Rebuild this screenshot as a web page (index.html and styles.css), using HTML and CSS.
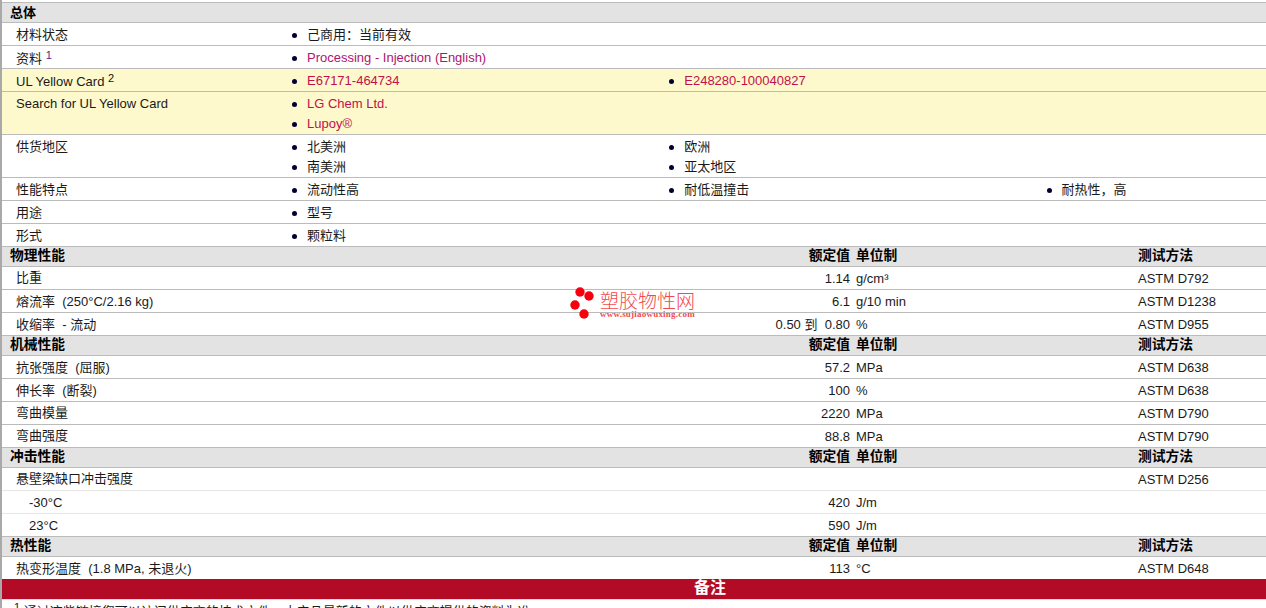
FILE: index.html
```html
<!DOCTYPE html>
<html lang="zh-CN">
<head>
<meta charset="utf-8">
<title>Lupoy</title>
<link rel="stylesheet" href="styles.css">
</head>
<body>
<main class="sheet">
  <div class="head"><span>总体</span></div>
  <div class="row"><div class="label">材料状态</div><ul class="vals"><li>己商用：当前有效</li></ul></div>
  <div class="row"><div class="label cjk-sup">资料 <sup class="note visited">1</sup></div><ul class="vals"><li><a class="visited">Processing - Injection (English)</a></li></ul></div>
  <div class="row yellow"><div class="label cjk-sup">UL Yellow Card <sup class="note">2</sup></div><ul class="vals"><li><a>E67171-464734</a></li><li><a>E248280-100040827</a></li></ul></div>
  <div class="row yellow"><div class="label">Search for UL Yellow Card</div><ul class="vals one"><li><a>LG Chem Ltd.</a></li><li><a>Lupoy®</a></li></ul></div>
  <div class="row"><div class="label">供货地区</div><ul class="vals two"><li>北美洲</li><li>欧洲</li><li>南美洲</li><li>亚太地区</li></ul></div>
  <div class="row"><div class="label">性能特点</div><ul class="vals"><li>流动性高</li><li>耐低温撞击</li><li>耐热性，高</li></ul></div>
  <div class="row"><div class="label">用途</div><ul class="vals"><li>型号</li></ul></div>
  <div class="row"><div class="label">形式</div><ul class="vals"><li>颗粒料</li></ul></div>

  <div class="head data"><span>物理性能</span><span class="unit">额定值</span><span class="unit-h">单位制</span><span class="test">测试方法</span></div>
  <div class="drow"><span class="name cjk">比重</span><span class="num">1.14</span><span class="unit-c">g/cm³</span><span class="test">ASTM D792</span></div>
  <div class="drow"><span class="name">熔流率&nbsp; (250°C/2.16 kg)</span><span class="num">6.1</span><span class="unit-c">g/10 min</span><span class="test">ASTM D1238</span></div>
  <div class="drow"><span class="name">收缩率&nbsp; - 流动</span><span class="num">0.50 到&nbsp; 0.80</span><span class="unit-c">%</span><span class="test">ASTM D955</span></div>

  <div class="head data"><span>机械性能</span><span class="unit">额定值</span><span class="unit-h">单位制</span><span class="test">测试方法</span></div>
  <div class="drow"><span class="name">抗张强度&nbsp; (屈服)</span><span class="num">57.2</span><span class="unit-c">MPa</span><span class="test">ASTM D638</span></div>
  <div class="drow"><span class="name">伸长率&nbsp; (断裂)</span><span class="num">100</span><span class="unit-c">%</span><span class="test">ASTM D638</span></div>
  <div class="drow"><span class="name cjk">弯曲模量</span><span class="num">2220</span><span class="unit-c">MPa</span><span class="test">ASTM D790</span></div>
  <div class="drow"><span class="name cjk">弯曲强度</span><span class="num">88.8</span><span class="unit-c">MPa</span><span class="test">ASTM D790</span></div>

  <div class="head data"><span>冲击性能</span><span class="unit">额定值</span><span class="unit-h">单位制</span><span class="test">测试方法</span></div>
  <div class="drow light"><span class="name cjk">悬壁梁缺口冲击强度</span><span class="num"></span><span class="unit-c"></span><span class="test">ASTM D256</span></div>
  <div class="drow light"><span class="name sub">-30°C</span><span class="num">420</span><span class="unit-c">J/m</span><span class="test"></span></div>
  <div class="drow"><span class="name sub">23°C</span><span class="num">590</span><span class="unit-c">J/m</span><span class="test"></span></div>

  <div class="head data"><span>热性能</span><span class="unit">额定值</span><span class="unit-h">单位制</span><span class="test">测试方法</span></div>
  <div class="drow last"><span class="name">热变形温度&nbsp; (1.8 MPa, 未退火)</span><span class="num">113</span><span class="unit-c">°C</span><span class="test">ASTM D648</span></div>

  <div class="banner">备注</div>
  <p class="foot"><sup>1</sup> 通过这些链接您可以访问供应商的技术文件。本产品最新的文件以供应商提供的资料为准。</p>

  <div class="mark">
    <svg class="mark-dots" width="28" height="36" viewBox="0 0 28 36" aria-hidden="true">
      <circle cx="10" cy="7" r="4.7"/><circle cx="19" cy="11" r="4.7"/><circle cx="5" cy="20" r="4.7"/><circle cx="14" cy="29" r="4.7"/>
    </svg>
    <div class="mark-text"><div class="mark-cn">塑胶物性网</div><div class="mark-en">www.sujiaowuxing.com</div></div>
  </div>
</main>
</body>
</html>
```

FILE: styles.css
```css
html, body { margin: 0; padding: 0; height: 608px; overflow: hidden; background: #fff; }
body {
  font-family: "Liberation Sans", "Noto Sans CJK SC", sans-serif;
  font-size: 13px;
  color: #1a1a1a;
  line-height: 20px;
}
.sheet {
  position: relative;
  height: 608px;
  padding-top: 2px;
  box-sizing: border-box;
  border-left: 2px solid #a9a9a9;
  overflow: hidden;
}
.head {
  border-bottom: 1px solid #bbb;
  background: #e3e3e3;
  height: 19px;
  line-height: 18px;
  padding-left: 8px;
  font-weight: 700;
  font-size: 13px;
  color: #000;
}
.sheet > .head:first-child { border-top: 1px solid #bbb; line-height: 19px; }
.head.data {
  display: grid;
  grid-template-columns: 292px 548px 282px 1fr;
  font-size: 13.75px;
}
.head .unit { text-align: right; white-space: nowrap; }
.unit-h { padding-left: 6px; }
.head .test { padding-left: 6px; }

.row {
  display: grid;
  grid-template-columns: 290px 1fr;
  padding: 2px 0 0;
  border-bottom: 1px solid #bbb;
  min-height: 20px;
}
.row.yellow { background: #fdf9cc; }
.label { padding-left: 14px; }
.cjk-sup { padding-top: 1px; margin-bottom: -1px; }
.note { font-size: 11px; line-height: 0; color: #111; position: relative; top: 1px; }
.note.visited { color: #551a8b; }
.vals {
  margin: 0;
  padding: 0;
  list-style: none;
  display: grid;
  grid-template-columns: repeat(3, 377.25px);
}
.vals.one { grid-template-columns: 1fr; }
.vals.two { grid-template-columns: repeat(2, 377.25px); }
.vals li {
  position: relative;
  padding-left: 15px;
}
.vals li::before {
  content: "";
  position: absolute;
  left: 0;
  top: 8px;
  width: 5px;
  height: 5px;
  border-radius: 50%;
  background: #000033;
}
.vals a { color: #c2104a; }
.vals a.visited { color: #b0136e; }

.drow {
  display: grid;
  grid-template-columns: 300px 548px 282px 1fr;
  padding: 2px 0 0;
  border-bottom: 1px solid #bbb;
  height: 20px;
  align-items: end;
}
.drow.light { border-bottom-color: #e6e6e6; }
.drow.last { border-bottom: 0; }
.name { padding-left: 14px; white-space: nowrap; }
.name.cjk { line-height: 18px; padding-bottom: 2px; }
.name.sub { padding-left: 27px; }
.num { text-align: right; white-space: nowrap; }
.unit-c { padding-left: 6px; }
.test { padding-left: 6px; }

.banner {
  height: 20px;
  line-height: 18px;
  background: #b30b26;
  color: #fff;
  font-size: 16px;
  font-weight: 700;
  text-align: center;
  padding-left: 152px;
  border-bottom: 1px solid #e3dfc8;
}
.foot { margin: 2px 0 0; padding-left: 12px; white-space: nowrap; line-height: 20px; }
.foot sup { font-size: 11px; line-height: 0; }

.mark {
  position: absolute;
  left: 568px;
  top: 285px;
  display: flex;
  gap: 2px;
  pointer-events: none;
}
.mark-dots { fill: #f6000f; }
.mark-text { color: #f2494f; }
.mark-cn { font-size: 19px; line-height: 19px; margin-top: 7px; font-weight: 300; white-space: nowrap; }
.mark-en { font-family: "Liberation Serif", serif; font-size: 9px; line-height: 7px; font-weight: 700; white-space: nowrap; letter-spacing: 0.22px; }
```
